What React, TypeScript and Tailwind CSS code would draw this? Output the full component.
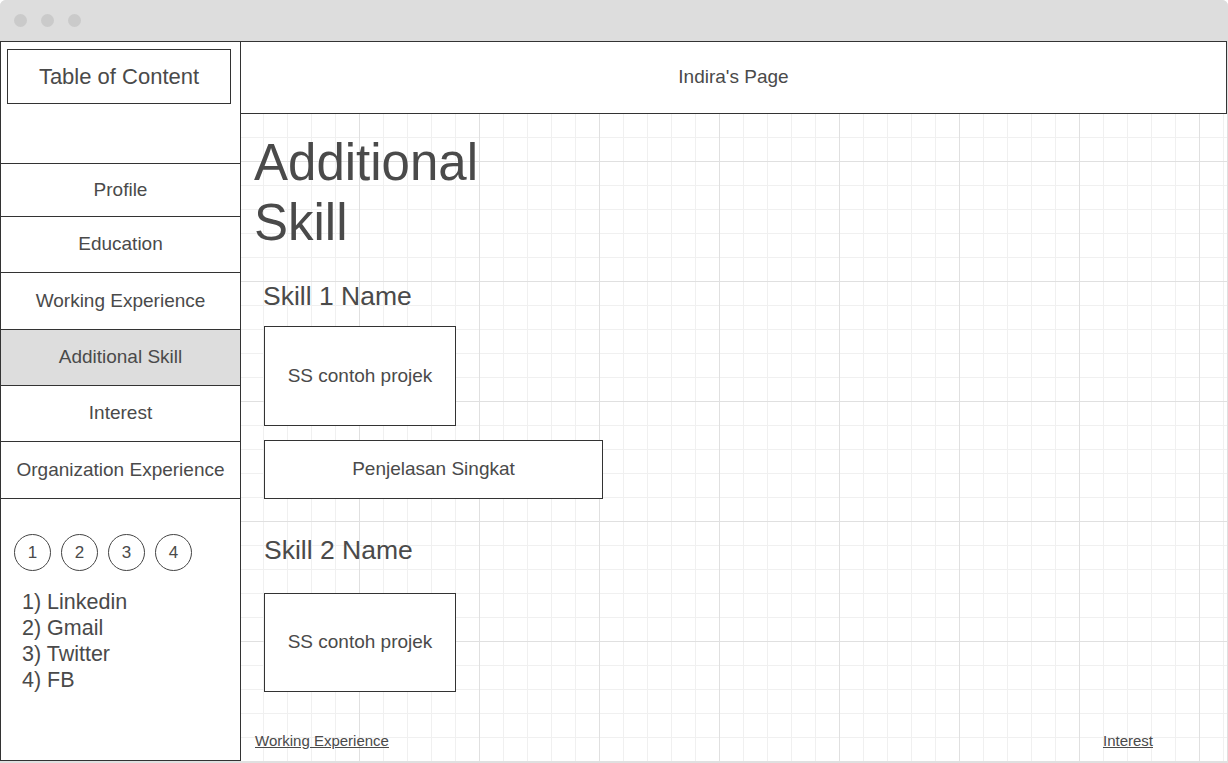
const navItems = [
  { label: 'Profile', h: 'h-[53px]', active: false },
  { label: 'Education', h: 'h-[56px]', active: false },
  { label: 'Working Experience', h: 'h-[57px]', active: false },
  { label: 'Additional Skill', h: 'h-[56px]', active: true },
  { label: 'Interest', h: 'h-[56px]', active: false },
  { label: 'Organization Experience', h: 'h-[57px]', active: false },
];

const links = ['Linkedin', 'Gmail', 'Twitter', 'FB'];

const Sidebar = () => (
  <aside className="w-[241px] h-[720px] shrink-0 bg-white border border-[#333] flex flex-col">
    <div className="mt-[7px] ml-[6px] w-[224px] h-[55px] border border-[#333] flex items-center justify-center text-[22px]">
      Table of Content
    </div>

    <nav className="mt-[59px] flex flex-col border-b border-[#333]">
      {navItems.map((item) => (
        <div
          key={item.label}
          className={[
            'border-t border-[#333] flex items-center justify-center text-[19px]',
            item.h,
            item.active ? 'bg-[#dddddd]' : 'bg-white',
          ].join(' ')}
        >
          {item.label}
        </div>
      ))}
    </nav>

    <div className="mt-[35px] pl-[13px] flex gap-[10px]">
      {[1, 2, 3, 4].map((n) => (
        <div
          key={n}
          className="w-[37px] h-[37px] rounded-full border border-[#444] flex items-center justify-center text-[17px]"
        >
          {n}
        </div>
      ))}
    </div>

    <ol className="mt-[18px] pl-[21px] text-[21.5px] leading-[26px]">
      {links.map((l, i) => (
        <li key={l}>
          {i + 1}) {l}
        </li>
      ))}
    </ol>
  </aside>
);

const SkillBox = ({ className }: { className: string }) => (
  <div className={'border border-[#333] bg-white flex items-center justify-center text-[19px] ' + className}>
    SS contoh projek
  </div>
);

export default function App() {
  return (
    <div className="w-[1228px] h-[763px] bg-white font-['Liberation_Sans',Arial,sans-serif] text-[#4a4a4a] overflow-hidden">
      <div className="w-full h-full rounded-t-[6px] bg-[#e0e0e0] flex flex-col">
        <div className="h-[41px] shrink-0 flex items-center pl-[14px] gap-[14px] bg-[#dddddd] rounded-t-[6px]">
          <span className="w-[13px] h-[13px] rounded-full bg-[#cacaca]" />
          <span className="w-[13px] h-[13px] rounded-full bg-[#cacaca]" />
          <span className="w-[13px] h-[13px] rounded-full bg-[#cacaca]" />
        </div>

        <div className="flex w-[1227px]">
          <Sidebar />

          <main className="flex-1 h-[720px] flex flex-col">
            <header className="h-[73px] shrink-0 bg-white border-y border-r border-[#333] flex items-center justify-center text-[19px]">
              Indira&apos;s Page
            </header>

            <section className="flex-1 flex flex-col pl-[13px] pt-[19px] pb-[10px] bg-white bg-[image:linear-gradient(to_right,#e0e0e0_1px,transparent_1px),linear-gradient(to_bottom,#e0e0e0_1px,transparent_1px),linear-gradient(to_right,#f0f0f0_1px,transparent_1px),linear-gradient(to_bottom,#f0f0f0_1px,transparent_1px)] bg-[size:120px_120px,120px_120px,24px_24px,24px_24px] bg-[position:118px_0,0_47px,22px_0,0_23px]">
              <h1 className="w-[240px] text-[51px] leading-[60px]">Additional Skill</h1>

              <div className="pl-[10px]">
                <h2 className="mt-[27px] -ml-px text-[26.5px] leading-[32px]">Skill 1 Name</h2>
                <SkillBox className="mt-[14px] w-[192px] h-[100px]" />
                <div className="mt-[14px] w-[339px] h-[59px] border border-[#333] bg-white flex items-center justify-center text-[19px]">
                  Penjelasan Singkat
                </div>

                <h2 className="mt-[35px] text-[26.5px] leading-[32px]">Skill 2 Name</h2>
                <SkillBox className="mt-[27px] w-[192px] h-[99px]" />
              </div>

              <div className="mt-auto flex justify-between pl-px pr-[74px] text-[15px] leading-[20px]">
                <a href="#" className="underline">Working Experience</a>
                <a href="#" className="underline">Interest</a>
              </div>
            </section>
          </main>
        </div>
      </div>
    </div>
  );
}
